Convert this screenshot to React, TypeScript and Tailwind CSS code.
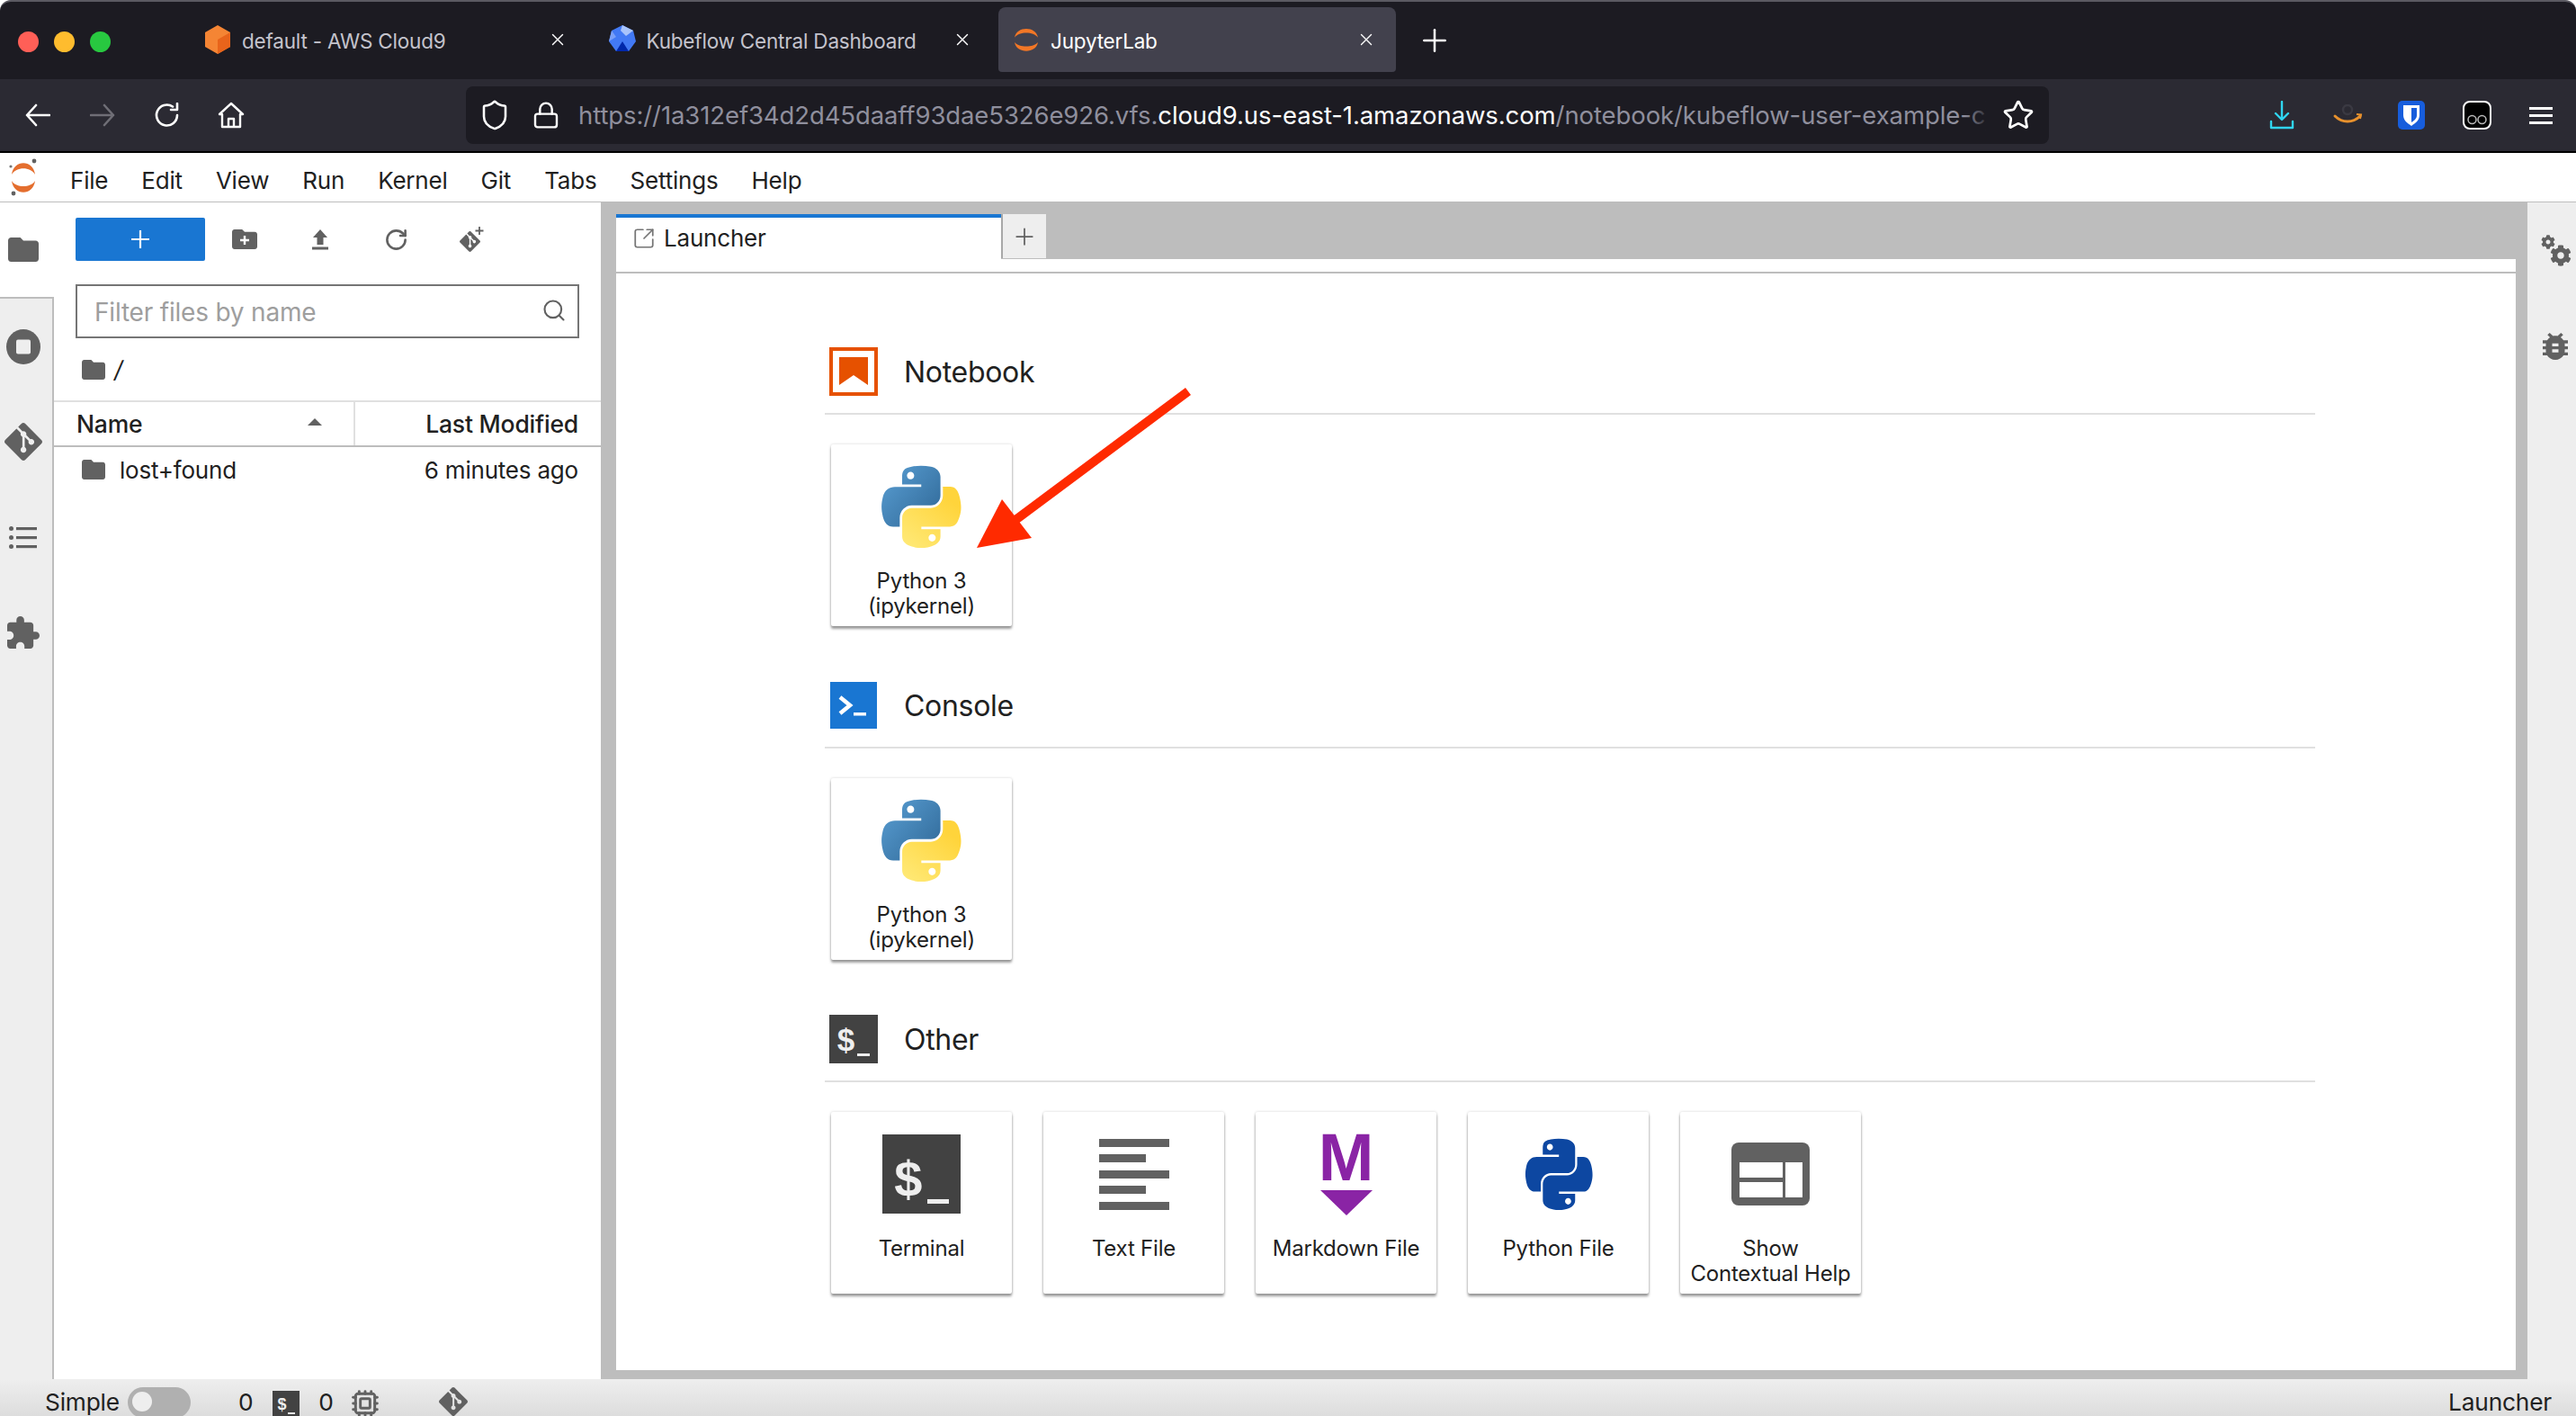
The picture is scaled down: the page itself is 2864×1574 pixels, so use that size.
import { Cpu, RotateCw, Search, SquareArrowOutUpRight, X, Plus, Star, Lock, Shield } from "lucide-react";
import { FaCog } from "react-icons/fa";
import { SiGit } from "react-icons/si";

const BLUE_SNAKE =
  "M54.9 0.9c-4.5 0-8.8.4-12.6 1.1C31.3 3.9 29.3 8 29.3 15.6v10h26v3.3H19.5c-7.6 0-14.2 4.5-16.3 13.2-2.4 10-2.5 16.2 0 26.6 1.9 7.8 6.3 13.2 13.9 13.2h9v-12c0-8.7 7.5-16.3 16.3-16.3h26c7.2 0 13-6 13-13.2V15.6c0-7.1-6-12.4-13-13.6C64 1.2 59.4.9 54.9.9z M40.8 8.9c2.7 0 4.9 2.2 4.9 5s-2.2 4.9-4.9 4.9-4.9-2.2-4.9-4.9 2.2-5 4.9-5z";
const YELLOW_SNAKE =
  "M84.7 28.9v11.6c0 9-7.6 16.6-16.3 16.6h-26c-7.1 0-13 6.1-13 13.2v24.8c0 7.1 6.2 11.2 13 13.2 8.2 2.4 16 2.8 26 0 6.5-1.9 13-5.7 13-13.2V85.1h-26v-3.3h39c7.6 0 10.4-5.3 13-13.2 2.7-8.2 2.6-16 0-26.6-1.9-7.6-5.4-13.2-13-13.2h-10.7z M70.1 91.7c2.7 0 4.9 2.2 4.9 4.9s-2.2 5-4.9 5-4.9-2.2-4.9-5 2.2-4.9 4.9-4.9z";
const FOLDER =
  "M10 4H4c-1.1 0-2 .9-2 2v12c0 1.1.9 2 2 2h16c1.1 0 2-.9 2-2V8c0-1.1-.9-2-2-2h-8l-2-2z";
const BUG =
  "M20 8h-2.81c-.45-.78-1.07-1.45-1.82-1.96L17 4.41 15.59 3l-2.17 2.17C12.96 5.06 12.49 5 12 5c-.49 0-.96.06-1.41.17L8.41 3 7 4.41l1.62 1.63C7.88 6.55 7.26 7.22 6.81 8H4v2h2.09c-.05.33-.09.66-.09 1v1H4v2h2v1c0 .34.04.67.09 1H4v2h2.81c1.04 1.79 2.97 3 5.19 3s4.15-1.21 5.19-3H20v-2h-2.09c.05-.33.09-.66.09-1v-1h2v-2h-2v-1c0-.34-.04-.67-.09-1H20V8zm-6 8h-4v-2h4v2zm0-4h-4v-2h4v2z";
const EXTENSION =
  "M20.5 11H19V7c0-1.1-.9-2-2-2h-4V3.5C13 2.12 11.88 1 10.5 1S8 2.12 8 3.5V5H4c-1.1 0-1.99.9-1.99 2v3.8H3.5c1.49 0 2.7 1.21 2.7 2.7s-1.21 2.7-2.7 2.7H2V20c0 1.1.9 2 2 2h3.8v-1.5c0-1.49 1.21-2.7 2.7-2.7 1.49 0 2.7 1.21 2.7 2.7V22H17c1.1 0 2-.9 2-2v-4h1.5c1.38 0 2.5-1.12 2.5-2.5S21.88 11 20.5 11z";

function PythonLogo({ id }: { id: string }) {
  return (
    <svg width="90" height="92" viewBox="0 0 110 110" preserveAspectRatio="none" className="mr-[2px]">
      <defs>
        <linearGradient id={`${id}-b`} x1="0" y1="0" x2="1" y2="0.9">
          <stop offset="0" stopColor="#5a9fd4" />
          <stop offset="1" stopColor="#306998" />
        </linearGradient>
        <linearGradient id={`${id}-y`} x1="0.2" y1="1" x2="0.8" y2="0.2">
          <stop offset="0" stopColor="#ffe873" />
          <stop offset="1" stopColor="#ffd43b" />
        </linearGradient>
      </defs>
      <path d={BLUE_SNAKE} fill={`url(#${id}-b)`} fillRule="evenodd" />
      <path d={YELLOW_SNAKE} fill={`url(#${id}-y)`} fillRule="evenodd" />
    </svg>
  );
}

function FolderIcon({ w, h, className }: { w: number; h: number; className?: string }) {
  return (
    <svg width={w} height={h} viewBox="2 4 20 16" preserveAspectRatio="none" className={className}>
      <path d={FOLDER} fill="#616161" />
    </svg>
  );
}

function JupyterArcs({ w, h, color, dots }: { w: number; h: number; color: string; dots?: boolean }) {
  return (
    <svg width={w} height={h} viewBox="0 0 32 42" preserveAspectRatio="none">
      <path d="M3 18C5 1 27 1 29 18C24 9 8 9 3 18Z" fill={color} />
      <path d="M3 25C5 42 27 42 29 25C24 33 8 33 3 25Z" fill={color} />
      {dots && (
        <>
          <circle cx="28" cy="3" r="2.4" fill="#616161" />
          <circle cx="2" cy="9" r="1.6" fill="#757575" />
          <circle cx="5" cy="39" r="2.4" fill="#616161" />
        </>
      )}
    </svg>
  );
}

// "$_" prompt used by the terminal icons, the underscore is just a bar
function DollarPrompt({ box, font, barW, barH }: { box: string; font: string; barW: number; barH: number }) {
  return (
    <div className={`flex items-center justify-center bg-[#424242] text-[#eeeeee] font-bold leading-none font-['Liberation_Sans',sans-serif] ${box}`}>
      <span className={font}>$</span>
      <div className="self-end bg-[#eeeeee] ml-[6%]" style={{ width: barW, height: barH, marginBottom: barH * 2.2 }} />
    </div>
  );
}

function BrowserTab({
  label,
  icon,
  active,
}: {
  label: string;
  icon: React.ReactNode;
  active?: boolean;
}) {
  return (
    <div
      className={`flex items-center w-[442px] h-[72px] mt-[8px] pl-[15px] pr-[24px] rounded-t-[8px] rounded-b-[4px] ${
        active ? "bg-[#42414d] text-white" : "text-[#c4c3cc]"
      }`}
    >
      <div className="flex items-center justify-center w-[32px] h-[32px]">{icon}</div>
      <span className="ml-[11px] mt-[3px] text-[22.5px] tracking-[-0.2px]">{label}</span>
      <X size={22} strokeWidth={1.5} className="ml-auto -mr-[2px] text-white" />
    </div>
  );
}

function LauncherCard({ label, icon }: { label: string[]; icon: React.ReactNode }) {
  return (
    <div className="flex flex-col items-center w-[201px] h-[202px] rounded-[2px] bg-white shadow-[0_3px_3px_rgba(0,0,0,0.38),0_0_3px_rgba(0,0,0,0.18)]">
      <div className="flex items-center justify-center h-[138px] w-full">{icon}</div>
      <div className="text-center text-[24px] leading-[28px] text-[#212121] whitespace-nowrap tracking-[-0.2px]">
        {label.map((l) => (
          <div key={l}>{l}</div>
        ))}
      </div>
    </div>
  );
}

function LauncherSection({
  title,
  icon,
  children,
}: {
  title: string;
  icon: React.ReactNode;
  children: React.ReactNode;
}) {
  return (
    <div className="w-[1657px] h-[371px]">
      <div className="flex items-center h-[75px] pb-[19px] pl-[5px] border-b-2 border-[#e0e0e0]">
        <div className="flex items-center justify-center w-[54px] h-[54px]">{icon}</div>
        <span className="ml-[29px] mt-[1px] text-[32px] text-[#212121] tracking-[-0.3px]">{title}</span>
      </div>
      <div className="flex gap-[35px] mt-[33px] pl-[7px]">{children}</div>
    </div>
  );
}

function TextFileIcon() {
  const rows = [78, 52, 78, 52, 78];
  return (
    <div className="flex flex-col gap-[8.5px] w-[78px]">
      {rows.map((w, i) => (
        <div key={i} className="h-[9px] bg-[#616161]" style={{ width: w }} />
      ))}
    </div>
  );
}

function SideTab({ children }: { children: React.ReactNode }) {
  return <div className="flex items-center justify-center h-[106px] w-full">{children}</div>;
}

const menus = ["File", "Edit", "View", "Run", "Kernel", "Git", "Tabs", "Settings", "Help"];

export default function App() {
  return (
    <div className="relative flex flex-col w-[2864px] h-[1574px] overflow-hidden bg-white font-['Inter',sans-serif]">
      {/* firefox tab strip */}
      <div className="flex h-[88px] shrink-0 bg-[#1c1b22] border-t-2 border-[#5b5a62] rounded-t-[12px]">
        <div className="flex items-center gap-[17px] w-[211px] pl-[20px] pt-[2px]">
          <div className="w-[23px] h-[23px] rounded-full bg-[#ff5f57]" />
          <div className="w-[23px] h-[23px] rounded-full bg-[#febc2e]" />
          <div className="w-[23px] h-[23px] rounded-full bg-[#28c840]" />
        </div>
        <div className="flex gap-[7.5px] -mt-[2px]">
          <BrowserTab
            label="default - AWS Cloud9"
            icon={
              <svg width="32" height="32" viewBox="0 0 32 32">
                <path d="M16 0L30 8V24L16 32L2 24V8Z" fill="#f58534" />
                <path d="M16 16L30 8V24L16 32Z" fill="#e8641b" />
              </svg>
            }
          />
          <BrowserTab
            label="Kubeflow Central Dashboard"
            icon={
              <svg width="32" height="32" viewBox="0 0 32 32">
                <path d="M16 0L28 6L31 18L23 29L9 29L1 18L4 6Z" fill="#4279f4" />
                <path d="M16 0L28 6L20 12L14 6Z" fill="#a9c4fb" />
                <path d="M9 29L16 18L23 29Z" fill="#0028aa" />
                <path d="M4 6L9 13L1 18Z" fill="#7aa0f8" />
              </svg>
            }
          />
          <BrowserTab active label="JupyterLab" icon={<JupyterArcs w={32} h={32} color="#f37726" />} />
        </div>
        <Plus size={40} strokeWidth={1.5} className="ml-[23px] mt-[23px] text-white" />
      </div>

      {/* firefox nav bar */}
      <div className="flex items-center h-[80px] pl-[28px] bg-[#2b2a33] text-white shrink-0">
        <svg width="28" height="26" viewBox="0 0 28 26" fill="none" stroke="white" strokeWidth="2.6" strokeLinecap="round" strokeLinejoin="round">
          <path d="M12 2L2 13L12 24M2 13H27" />
        </svg>
        <svg className="ml-[44px]" width="28" height="26" viewBox="0 0 28 26" fill="none" stroke="#6f6e76" strokeWidth="2.6" strokeLinecap="round" strokeLinejoin="round">
          <path d="M16 2L26 13L16 24M26 13H1" />
        </svg>
        <svg className="ml-[44px]" width="28" height="28" viewBox="0 0 28 28" fill="none" stroke="white" strokeWidth="2.6" strokeLinecap="round" strokeLinejoin="round">
          <path d="M25 14A11.5 11.5 0 1 1 20 4.5M25 1V8H18" />
        </svg>
        <svg className="ml-[42px]" width="30" height="30" viewBox="0 0 30 30" fill="none" stroke="white" strokeWidth="2.4" strokeLinejoin="round">
          <path d="M15 2L28 14H25V28H5V14H2ZM12 28V19H18V28" />
        </svg>
        <div className="flex items-center w-[1760px] h-[64px] ml-[246px] pl-[16px] pr-[16px] rounded-[8px] bg-[#1c1b22]">
          <Shield size={36} strokeWidth={1.7} className="-ml-[2px] shrink-0" />
          <Lock size={32} strokeWidth={1.8} className="ml-[23px] shrink-0" />
          <div className="relative flex-1 ml-[20px] pt-[2px] whitespace-nowrap text-[27.5px] tracking-[-0.1px] text-[#8f8f9d]">
            https://1a312ef34d2d45daaff93dae5326e926.vfs.
            <span className="text-white">cloud9.us-east-1.amazonaws.com</span>
            /notebook/kubeflow-user-example-c
            <div className="absolute right-0 top-0 bottom-0 w-[30px] bg-gradient-to-r from-transparent to-[#1c1b22]" />
          </div>
          <Star size={36} strokeWidth={1.8} className="ml-[12px] shrink-0" />
        </div>
        <svg className="ml-[245px]" width="28" height="32" viewBox="0 0 28 32" fill="none" stroke="#30d5f0" strokeWidth="2.4" strokeLinecap="round" strokeLinejoin="round">
          <path d="M14 1V20M7 14L14 21L21 14M2 23V30H26V23" />
        </svg>
        <svg className="ml-[42px]" width="34" height="24" viewBox="0 0 34 24" fill="none">
          <path d="M3 13C11 21 23 21 31 13" stroke="#e8912d" strokeWidth="3" strokeLinecap="round" />
          <path d="M27 11L32 11.5L31 16" stroke="#e8912d" strokeWidth="2" />
          <circle cx="17" cy="6" r="5" stroke="#3a3942" strokeWidth="2.5" />
        </svg>
        <svg className="ml-[39px]" width="30" height="32" viewBox="0 0 30 32">
          <rect width="30" height="32" rx="5" fill="#175ddc" />
          <path d="M6 5H24V16C24 22 19 25 15 28C11 25 6 22 6 16Z" fill="white" />
          <path d="M15 8H21V16C21 20 18 22 15 24Z" fill="#175ddc" />
        </svg>
        <svg className="ml-[42px]" width="32" height="32" viewBox="0 0 32 32" fill="none">
          <rect x="1" y="1" width="30" height="30" rx="7" fill="black" stroke="white" strokeWidth="2" />
          <circle cx="10.5" cy="21" r="4.5" stroke="#bbb" strokeWidth="1.5" />
          <circle cx="21.5" cy="21" r="4.5" stroke="#bbb" strokeWidth="1.5" />
        </svg>
        <div className="flex flex-col gap-[5px] ml-[42px]">
          <div className="w-[26px] h-[3px] bg-white" />
          <div className="w-[26px] h-[3px] bg-white" />
          <div className="w-[26px] h-[3px] bg-white" />
        </div>
      </div>
      <div className="h-[2px] bg-black shrink-0" />

      {/* jupyter menu */}
      <div className="flex items-center h-[55px] shrink-0 bg-white border-b border-[#bdbdbd] text-[#212121]">
        <div className="w-[78px] pl-[10px]">
          <JupyterArcs dots w={32} h={42} color="#e46e2e" />
        </div>
        <div className="flex gap-[37px] text-[26px] tracking-[-0.2px] pt-[6px]">
          {menus.map((m) => (
            <span key={m}>{m}</span>
          ))}
        </div>
      </div>

      <div className="flex flex-1 min-h-0 bg-[#bdbdbd]">
        {/* left activity bar */}
        <div className="flex flex-col w-[60px] shrink-0">
          <div className="flex items-center justify-center h-[105px] pr-[8px] bg-white">
            <FolderIcon w={34} h={27} />
          </div>
          <div className="flex-1 bg-[#eeeeee] border-t-2 border-r-2 border-[#bdbdbd] pr-[7px]">
            <SideTab>
              <svg width="38" height="39" viewBox="0 0 38 39">
                <ellipse cx="19" cy="19.5" rx="19" ry="19.5" fill="#616161" />
                <rect x="11" y="11.5" width="16" height="16" rx="2" fill="#eeeeee" />
              </svg>
            </SideTab>
            <SideTab>
              <SiGit size={42} color="#616161" />
            </SideTab>
            <SideTab>
              <svg width="31" height="25" viewBox="0 0 31 25" fill="#616161">
                <circle cx="2.5" cy="2.5" r="2.5" />
                <rect x="8" y="1" width="23" height="3.2" />
                <circle cx="2.5" cy="12.5" r="2.5" />
                <rect x="8" y="11" width="23" height="3.2" />
                <circle cx="2.5" cy="22.5" r="2.5" />
                <rect x="8" y="21" width="23" height="3.2" />
              </svg>
            </SideTab>
            <SideTab>
              <svg width="36" height="36" viewBox="2 1 21 21">
                <path d={EXTENSION} fill="#616161" />
              </svg>
            </SideTab>
          </div>
        </div>

        {/* file browser */}
        <div className="flex flex-col w-[608px] shrink-0 bg-white text-[#212121]">
          <div className="flex items-center pt-[17px] pl-[24px]">
            <div className="flex items-center justify-center w-[144px] h-[48px] rounded-[2px] bg-[#1976d2]">
              <svg width="20" height="20" viewBox="0 0 20 20" stroke="white" strokeWidth="2.2">
                <path d="M10 0V20M0 10H20" />
              </svg>
            </div>
            <div className="relative ml-[30px] w-[28px] h-[22px]">
              <FolderIcon w={28} h={22} />
              <svg className="absolute left-[8px] top-[6px]" width="12" height="12" viewBox="0 0 12 12" stroke="white" strokeWidth="2.4">
                <path d="M6 1V11M1 6H11" />
              </svg>
            </div>
            <svg className="ml-[60px]" width="20" height="23" viewBox="0 0 20 23" fill="#616161">
              <path d="M10 0L18 9H13.5V17H6.5V9H2ZM1 19.5H19V22.5H1Z" />
            </svg>
            <RotateCw size={27} strokeWidth={2.3} color="#616161" className="ml-[61px]" />
            <svg className="ml-[57px]" width="28" height="28" viewBox="0 0 28 28">
              <SiGit x="0" y="5" size={23} color="#616161" />
              <path d="M22 0V9M17.5 4.5H26.5" stroke="#616161" strokeWidth="1.8" />
            </svg>
          </div>
          <div className="flex items-center w-[560px] h-[60px] ml-[24px] mt-[26px] pl-[19px] pr-[12px] border-2 border-[#757575] text-[28px] tracking-[-0.2px] text-[#9e9e9e]">
            <span className="pt-[2px]">Filter files by name</span>
            <Search size={28} strokeWidth={1.8} color="#616161" className="ml-auto -mt-[2px]" />
          </div>
          <div className="flex items-center h-[69px] pl-[31px]">
            <FolderIcon w={26} h={22} />
            <span className="ml-[10px] text-[26px] italic leading-none">/</span>
          </div>
          <div className="flex h-[52px] border-y-2 border-t-[#e0e0e0] border-b-[#bdbdbd] text-[26.5px] font-medium tracking-[-0.2px]">
            <div className="flex items-center w-[335px] pl-[25px] pr-[35px] border-r-2 border-[#e0e0e0]">
              <span className="pt-[2px]">Name</span>
              <div className="ml-auto mb-[4px] w-0 h-0 border-x-[8px] border-x-transparent border-b-[8px] border-b-[#616161]" />
            </div>
            <div className="flex items-center justify-end flex-1 pr-[25px] pt-[2px]">Last Modified</div>
          </div>
          <div className="flex items-center h-[50px] pl-[31px] pr-[25px] text-[26px] tracking-[-0.2px]">
            <FolderIcon w={26} h={22} />
            <span className="ml-[16px]">lost+found</span>
            <span className="ml-auto">6 minutes ago</span>
          </div>
        </div>

        {/* main dock */}
        <div className="flex flex-col flex-1 min-w-0 pl-[17px] pr-[13px] pb-[10px]">
          <div className="flex items-start h-[63px] shrink-0 pt-[13px]">
            <div className="relative z-10 flex items-center w-[428px] h-[64px] pb-[15px] pl-[18px] border-t-4 border-[#1976d2] bg-white">
              <SquareArrowOutUpRight size={26} strokeWidth={1.6} color="#757575" />
              <span className="ml-[9px] text-[26px] text-[#212121] tracking-[-0.2px]">Launcher</span>
            </div>
            <div className="flex items-center justify-center w-[50px] h-[49px] bg-[#eeeeee] border-l-2 border-[#a8a8a8]">
              <Plus size={30} strokeWidth={1.4} color="#616161" />
            </div>
          </div>
          <div className="flex-1 bg-white pt-[14px]">
            <div className="h-[84px] border-t-2 border-[#bdbdbd]" />
            <div className="pl-[232px]">
              <LauncherSection
                title="Notebook"
                icon={
                  <svg width="54" height="54" viewBox="0 0 54 54">
                    <rect x="2" y="2" width="50" height="50" fill="white" stroke="#e65100" strokeWidth="4" />
                    <path d="M11 11H43V42L27 31L11 42Z" fill="#e65100" />
                  </svg>
                }
              >
                <LauncherCard label={["Python 3", "(ipykernel)"]} icon={<PythonLogo id="nb" />} />
              </LauncherSection>
              <LauncherSection
                title="Console"
                icon={
                  <svg width="52" height="52" viewBox="0 0 52 52">
                    <rect width="52" height="52" fill="#1976d2" />
                    <path d="M11 17L22 26L11 35" fill="none" stroke="white" strokeWidth="4.5" />
                    <rect x="26" y="34" width="14" height="3.5" fill="white" />
                  </svg>
                }
              >
                <LauncherCard label={["Python 3", "(ipykernel)"]} icon={<PythonLogo id="con" />} />
              </LauncherSection>
              <LauncherSection
                title="Other"
                icon={<DollarPrompt box="w-[54px] h-[54px] pt-[1px]" font="text-[35px]" barW={14} barH={3.5} />}
              >
                <LauncherCard
                  label={["Terminal"]}
                  icon={<DollarPrompt box="w-[87px] h-[88px] pt-[12px]" font="text-[56px]" barW={24} barH={5} />}
                />
                <LauncherCard label={["Text File"]} icon={<TextFileIcon />} />
                <LauncherCard
                  label={["Markdown File"]}
                  icon={
                    <div className="flex flex-col items-center">
                      <span className="h-[56px] text-[74px] leading-[56px] font-bold text-[#8a24a5] font-['Liberation_Sans',sans-serif]">
                        M
                      </span>
                      <div className="mt-[8px] w-0 h-0 border-x-[29px] border-x-transparent border-t-[28px] border-t-[#8a24a5]" />
                    </div>
                  }
                />
                <LauncherCard
                  label={["Python File"]}
                  icon={
                    <svg width="76" height="80" viewBox="0 0 110 110" preserveAspectRatio="none">
                      <path d={BLUE_SNAKE} fill="#0d47a1" fillRule="evenodd" />
                      <path d={YELLOW_SNAKE} fill="#0d47a1" fillRule="evenodd" />
                    </svg>
                  }
                />
                <LauncherCard
                  label={["Show", "Contextual Help"]}
                  icon={
                    <svg width="87" height="70" viewBox="0 0 87 70">
                      <rect width="87" height="70" rx="8" fill="#616161" />
                      <rect x="9" y="22" width="48" height="17" fill="white" />
                      <rect x="9" y="44" width="48" height="17" fill="white" />
                      <rect x="60" y="22" width="19" height="39" fill="white" />
                    </svg>
                  }
                />
              </LauncherSection>
            </div>
          </div>
        </div>

        {/* right activity bar */}
        <div className="flex flex-col items-center w-[54px] shrink-0 bg-[#eeeeee]">
          <svg className="mt-[36px] ml-[10px]" width="34" height="35" viewBox="0 0 34 35">
            <FaCog x="0" y="0" size={16} color="#616161" />
            <FaCog x="10" y="11" size={24} color="#616161" />
          </svg>
          <svg className="mt-[74px] ml-[8px]" width="28" height="30" viewBox="4 3 16 18" preserveAspectRatio="none">
            <path d={BUG} fill="#616161" />
          </svg>
        </div>
      </div>

      {/* status bar */}
      <div className="flex items-start h-[41px] shrink-0 overflow-hidden pl-[50px] pr-[27px] pt-[10px] bg-gradient-to-b from-[#eeeeee] to-[#dddddd] text-[26.3px] text-[#212121] tracking-[-0.2px] leading-[31px]">
        <span>Simple</span>
        <div className="relative ml-[9px] w-[70px] h-[34px] -mt-[1px] shrink-0 rounded-full bg-[#b0b0b0]">
          <div className="absolute left-[5px] top-[5px] w-[22px] h-[22px] rounded-full bg-[#eeeeee]" />
        </div>
        <span className="ml-[53px]">0</span>
        <DollarPrompt box="ml-[22px] w-[30px] h-[30px] mt-[3px]" font="text-[18px]" barW={8} barH={2} />
        <span className="ml-[21px]">0</span>
        <Cpu size={32} strokeWidth={2.2} color="#616161" className="ml-[19px] mt-[1px]" />
        <SiGit size={32} color="#616161" className="ml-[66px] -mt-[1px]" />
        <span className="ml-auto">Launcher</span>
      </div>

      {/* red annotation arrow */}
      <svg className="absolute left-0 top-0 pointer-events-none" width="2864" height="1574">
        <path d="M1321 435L1125 581" stroke="#ff2a00" strokeWidth="10" />
        <path d="M1114 555L1086 609L1147 598Z" fill="#ff2a00" />
      </svg>
    </div>
  );
}
